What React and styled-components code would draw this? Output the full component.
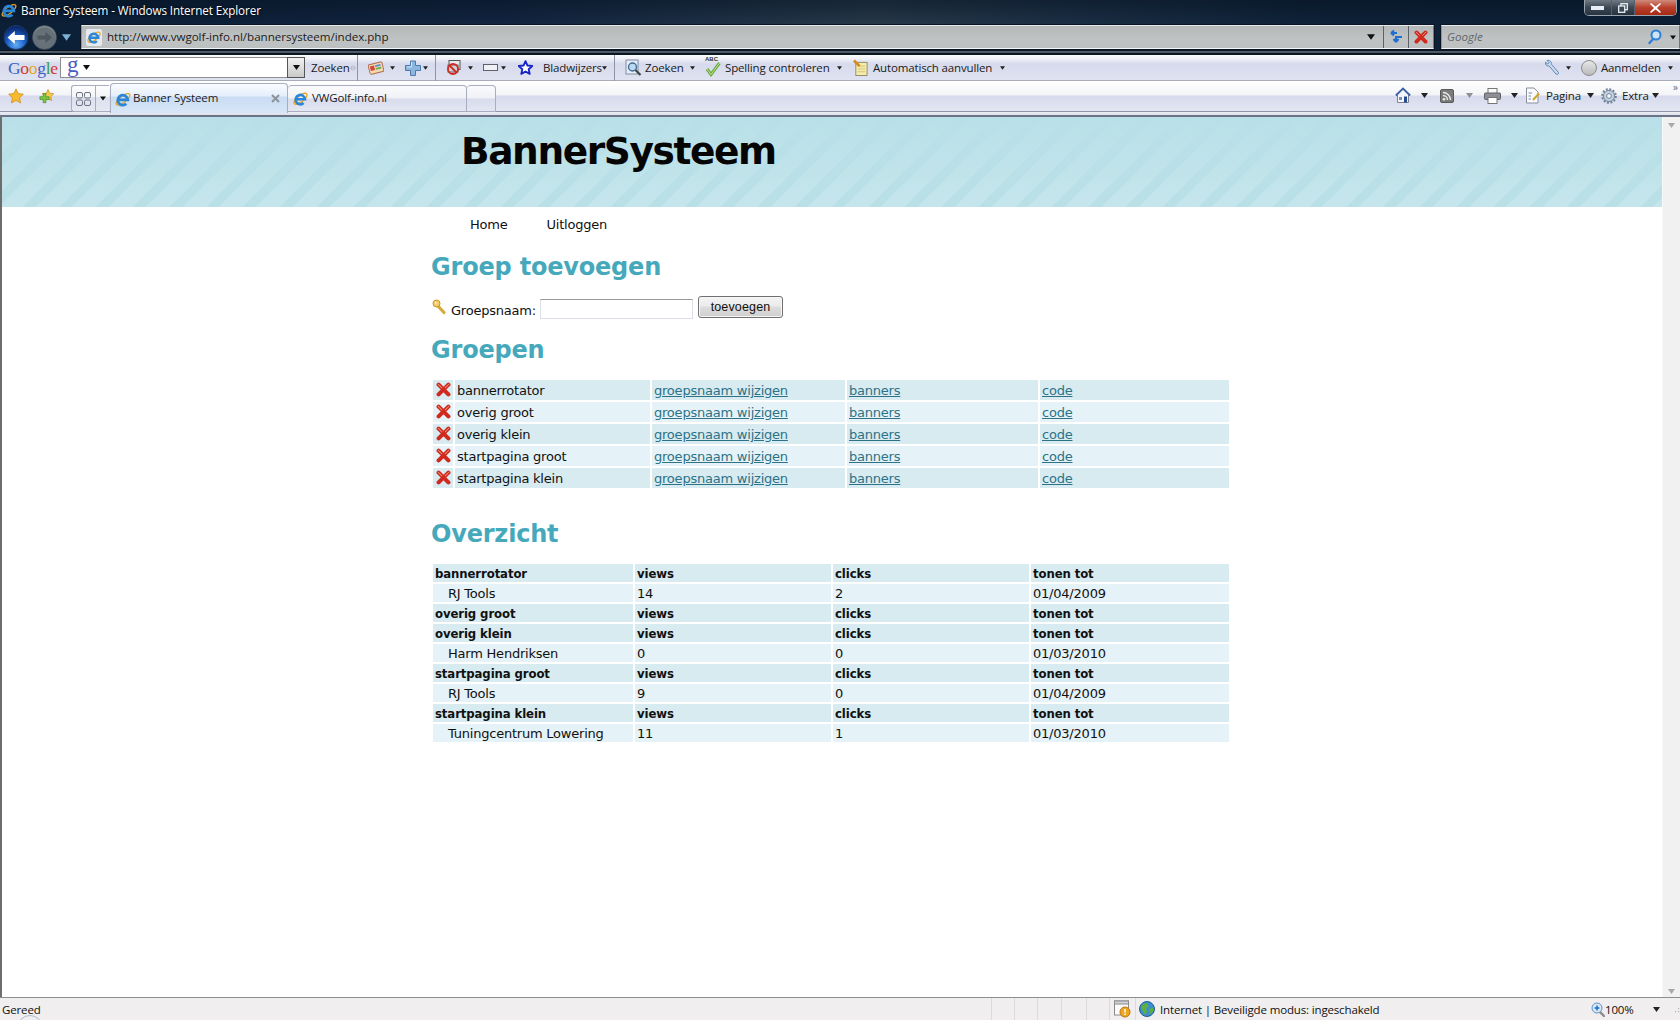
import React from "react";
import styled, { createGlobalStyle } from "styled-components";

const Global = createGlobalStyle`
  html, body { margin: 0; padding: 0; height: 100%; overflow: hidden; background: #fff; }
  #root { height: 100%; }
`;

const Shell = styled.div`
  height: 1020px; width: 1680px; display: flex; flex-direction: column; overflow: hidden;
  font-family: "Open Sans", "Noto Sans", sans-serif; position: relative;
`;

/* ---- dark frame ---- */
const Frame = styled.header`
  height: 55px; flex: none; display: flex; flex-direction: column; color: #fff;
  background:
    linear-gradient(to bottom, rgba(5,14,28,.45) 0, rgba(5,14,28,0) 24px),
    linear-gradient(to right, #0b1f36 0, #112540 30%, #263849 52%, #1c3045 62%, #0e2238 78%, #0d2036 100%);
`;
const TitleRow = styled.div`height: 25px; flex: none; display: flex; align-items: flex-start;`;
const TitleText = styled.div`
  font-size: 11.7px; line-height: 20px; margin-left: 4px; letter-spacing: -0.1px; color: #fff;
  text-shadow: 0 0 3px #000; white-space: nowrap;
`;
const TitleIcon = styled.div`margin: 2px 0 0 1px; width: 16px; height: 16px; display: flex;`;
const WinButtons = styled.div`
  margin-left: auto; margin-right: 3px; width: 93px; height: 16px; display: flex; flex: none;
  border: 1px solid #9aa4ad; border-top: none; border-radius: 0 0 5px 5px; overflow: hidden; box-sizing: border-box;
`;
const WinBtn = styled.div`
  flex: ${p => p.$grow || 1}; display: flex; align-items: center; justify-content: center;
  border-left: ${p => p.$first ? "none" : "1px solid #55616d"};
  background: ${p => p.$close ? "linear-gradient(to bottom,#d08a7a 0,#b8402c 50%,#a62a14 100%)" : "linear-gradient(to bottom,#6f7a84 0,#3c4854 50%,#27333f 100%)"};
`;
const AddressRow = styled.div`
  height: 30px; flex: none; display: flex; align-items: flex-start; position: relative;
`;
const NavPad = styled.div`width: 81px; height: 25px; flex: none; display: flex; align-items: center; padding-left: 2px; box-sizing: border-box; margin-top: 0;`;
const Field = styled.div`
  height: 22px; box-sizing: content-box; background: linear-gradient(to bottom,#b4b8b8,#c0c3c3 60%,#bcc0c0);
  border-top: 1px solid #e7e9ea; border-bottom: 1px solid #f4f6f7; border-left: 1px solid #8d949a; border-right: 1px solid #6f7880;
  display: flex; align-items: center; flex: none; box-shadow: 0 0 0 1px #0a1626;
`;
const AddressField = styled(Field)`width: 1351px;`;
const SearchField = styled(Field)`width: 237px; margin-left: 7px;`;
const PageChip = styled.div`
  margin-left: 4px; width: 16px; height: 17px; background: #e6eaee; border-radius: 2px; display: flex; align-items: center; justify-content: center; flex: none;
`;
const UrlText = styled.span`font-size: 11.6px; color: #1b1b1b; margin: -2px 0 0 5px; white-space: nowrap; letter-spacing: -0.03px;`;
const Divider = styled.div`width: 1px; height: 22px; background: #5a6268; flex: none;`;
const FieldBtn = styled.div`
  width: 24px; height: 22px; display: flex; align-items: center; justify-content: center; flex: none;
`;
const SearchHint = styled.span`font-size: 11.6px; font-style: italic; color: #60666a; margin: -2px 0 0 5px;`;
const EndLines = styled.div`
  position: absolute; left: 0; right: 0; bottom: 0; height: 5px;
  background: linear-gradient(to bottom,#0a1626 0,#0a1626 1px,#58636d 1px,#46525c 3px,#0c1522 3px,#0c1522 5px);
`;

/* ---- toolbars ---- */
const GoogleBar = styled.div`
  height: 26px; flex: none; display: flex; align-items: center; padding-left: 8px; box-sizing: border-box;
  padding-right: 7px; font-size: 11.5px; letter-spacing: -0.15px; color: #1a1a1a;
  background: linear-gradient(to bottom,#fbfcfe 0,#eef0f7 4px,#d6daec 9px,#dfe2f0 24px);
  border-bottom: 1px solid #a9acb8;
`;
const TabBar = styled.div`
  height: 36px; flex: none; display: flex; align-items: flex-start; box-sizing: border-box; padding-left: 8px; padding-right: 21px;
  font-size: 11.5px; letter-spacing: -0.15px; color: #1a1a1a; position: relative;
  background: linear-gradient(to bottom,#ffffff 0,#f3f4f7 14px,#d6daec 15px,#e3e6f2 30px,#8f93a8 30px,#8f93a8 31px,#eceef5 31px,#dde0ea 34px,#6c7288 34px,#6c7288 36px);
`;
const ToolRow = styled.div`display: flex; align-items: center; height: 30px; flex: none;`;
const RightTools = styled(ToolRow)`margin-left: auto; height: 29px;`;
const Slot = styled.div`
  flex: none; display: flex; align-items: center; justify-content: flex-start;
  margin-left: ${p => p.$ml || 0}px; width: ${p => p.$w}px; white-space: nowrap;
  ${p => p.$right ? "margin-left:auto;" : ""}
`;
const Sep = styled.div`flex: none; width: 1px; height: 26px; background: #8f93a3; margin-left: ${p => p.$ml || 0}px;`;
const GoogleLogo = styled.div`
  width: 48px; flex: none; font-family: "Liberation Serif", serif; font-size: 17.5px; letter-spacing: -0.3px; line-height: 20px; font-weight: 400;
`;
const Letter = styled.span`color: ${p => p.$c};`;
const GoogleInput = styled.div`
  margin-left: 4px; width: 245px; height: 21px; box-sizing: border-box; background: #fff; display: flex; align-items: center; flex: none;
  border: 1px solid #8f8f8f; border-right: none; padding-left: 6px; position: relative;
`;
const GLetter = styled.span`
  font-family: "Liberation Serif", serif; font-size: 23px; line-height: 19px; color: #4a5cc0; width: 13px; margin-top: -7px;
`;
const ComboBtn = styled.div`
  margin-left: auto; width: 18px; height: 21px; margin-top: -1px; margin-bottom: -1px; box-sizing: border-box; flex: none; display: flex;
  align-items: center; justify-content: center;
  background: linear-gradient(to bottom,#f2f2f2,#c9c9c9); border: 1px solid #555;
`;
const QuickGroup = styled.div`
  margin-left: 16px; margin-top: 4px; width: 38px; height: 27px; display: flex; box-sizing: border-box; flex: none;
  border: 1px solid #a8adc0; border-right: none; border-radius: 3px 0 0 3px; background: linear-gradient(to bottom,#fdfdfe 0,#f3f4f7 45%,#dde0ee 46%,#e6e8f3 100%);
`;
const QuickCell = styled.div`
  width: ${p => p.$w}px; display: flex; align-items: center; justify-content: center; flex: none;
  border-right: 1px solid #a8adc0;
`;
const Tab = styled.div`
  margin-left: ${p => p.$ml || 0}px; width: ${p => p.$w}px; height: ${p => p.$active ? 30 : 27}px; margin-top: ${p => p.$active ? 2 : 4}px;
  box-sizing: border-box; flex: none; display: flex; align-items: center; padding-left: ${p => p.$active ? 4 : 5}px;
  border: 1px solid #a8adc0; border-left: ${p => p.$noLeft ? "none" : "1px solid #a8adc0"}; border-radius: 4px 4px 0 0;
  background: ${p => p.$active
    ? "linear-gradient(to bottom,#fafcff 0,#e4eefb 12px,#c8dcf4 13px,#d9e6f7 100%)"
    : "linear-gradient(to bottom,#fbfbfd 0,#f0f1f5 12px,#d7dbec 13px,#e4e6f2 100%)"};
  ${p => p.$active ? "border-bottom: none;" : ""}
  position: relative;
`;
const TabTitle = styled.span`margin: -2px 0 0 ${p => p.$ml}px; white-space: nowrap; color: #1a1a1a;`;
const TabClose = styled.div`margin-left: auto; margin-right: 7px; display: flex;`;
const Chevrons = styled.div`position: absolute; right: 3px; top: 1px; font-size: 10px; line-height: 10px; color: #5f6b8a; letter-spacing: -1px;`;

/* ---- main ---- */
const Main = styled.div`flex: 1; display: flex; min-height: 0;`;
const Page = styled.main`
  flex: 1; min-width: 0; background: #fff; border-left: 2px solid #6d6d6d;
  font-family: "DejaVu Sans", Verdana, sans-serif; font-size: 13px; letter-spacing: -0.22px; color: #111;
`;
const Banner = styled.div`
  height: 90px; padding-left: 459px; box-sizing: border-box;
  background:
    linear-gradient(to bottom, #b9e0e8 0, rgba(185,224,232,.55) 50%, rgba(185,224,232,.1) 100%),
    repeating-linear-gradient(135deg, #b9dfe7 0, #b9dfe7 9px, #c6e6ec 9px, #c6e6ec 26px);
`;
const Title = styled.h1`margin: 0; font-size: 37.5px; line-height: 68px; font-weight: 700; color: #050505; letter-spacing: -1.4px;`;
const Content = styled.div`margin-left: 429px; width: 800px;`;
const Nav = styled.nav`height: 34px; display: flex; align-items: center; padding-left: 39px; gap: 39px;`;
const NavLink = styled.span`color: #111;`;
const Heading = styled.h2`
  margin: ${p => p.$mt}px 0 0; font-size: 24px; line-height: 30px; font-weight: 700; color: #46a9bb; letter-spacing: -0.2px;
`;
const FormRow = styled.form`margin: 0; margin-top: 14px; height: 23px; display: flex; align-items: flex-start;`;
const KeyWrap = styled.div`margin: 3px 0 0 1px; width: 15px; height: 16px; display: flex;`;
const FieldLabel = styled.label`margin: 6px 0 0 4px; line-height: 18px; width: 85px; flex: none; white-space: nowrap;`;
const TextInput = styled.input`
  margin: 3px 0 0 4px; width: 153px; height: 20px; box-sizing: border-box; padding: 0 2px; background: #fff;
  border: 1px solid #dcdfe6; border-top: 1px solid #9a9a9a; outline: none; flex: none;
`;
const AddButton = styled.button`
  margin: 0 0 0 5px; width: 85px; height: 22px; box-sizing: border-box; padding: 0 0 1px; flex: none;
  font-family: "Liberation Sans", Arial, sans-serif; font-size: 12.5px; color: #111; letter-spacing: .15px;
  border: 1px solid #707070; border-radius: 3px;
  background: linear-gradient(to bottom,#f4f4f4 0,#ebebeb 45%,#dddddd 50%,#cfcfcf 100%);
  box-shadow: inset 0 0 0 1px #f6f6f6;
`;
const Grid = styled.table`
  margin-top: ${p => p.$mt}px; width: 800px; table-layout: fixed; border-collapse: separate; border-spacing: 2px;
  font-size: 13px; letter-spacing: -0.22px;
`;
const Row = styled.tr`
  & > td { background: ${p => p.$even ? "#e5f2f7" : "#d7ebf1"}; height: ${p => p.$h}px; box-sizing: border-box; }
`;
const Cell = styled.td`
  padding: 2px 0 0 ${p => p.$pad || 2}px; white-space: nowrap; line-height: 16px; overflow: hidden; color: #111;
  ${p => p.$bold ? `font-family: "DejaVu Sans Condensed", "DejaVu Sans", sans-serif; font-weight: 700; letter-spacing: -0.1px;` : "font-weight: 400;"}
`;
const IconCell = styled.td`padding: 0 0 1px 3px; line-height: 0;`;
const LinkText = styled.a`color: #2d7286; text-decoration: underline;`;

const Scrollbar = styled.aside`
  width: 18px; flex: none; background: #f1f1f1; box-sizing: border-box; border-left: 1px solid #f8f8f8; display: flex; flex-direction: column;
  align-items: center; justify-content: space-between; padding: 6px 0 3px;
`;

/* ---- status ---- */
const Status = styled.footer`
  height: 23px; flex: none; box-sizing: border-box; border-top: 1px solid #8e8e8e; background: #f0eeee; display: flex; align-items: center;
  font-size: 11.5px; letter-spacing: -0.15px; color: #111; padding-left: 2px; position: relative; overflow: hidden;
`;
const StatusLabel = styled.span`width: ${p => p.$w}px; margin-left: ${p => p.$ml || 0}px; flex: none; white-space: nowrap; display: flex; align-items: center;`;
const Notch = styled.div`
  flex: none; width: 1px; height: 22px; background: #dcdada; margin-left: ${p => p.$ml}px;
`;
const Orb = styled.div`
  position: absolute; left: 17px; top: 17px; width: 26px; height: 26px; border-radius: 50%; border: 1px solid #a9bdd1; box-sizing: border-box;
`;

/* ---- icons ---- */
const Caret = ({ w = 5, c = "#222" }) => (
  <svg width={w} height={Math.ceil(w * 0.7)} viewBox="0 0 10 7"><path d="M0 0H10L5 7Z" fill={c} /></svg>
);
const IE = ({ s = 16 }) => (
  <svg width={s} height={s} viewBox="0 0 16 16">
    <ellipse cx="8" cy="8.300" rx="8.300" ry="3.200" transform="rotate(-38 8 8.300)" fill="none" stroke="#e6a41c" strokeWidth="1.300" />
    <path d="M3.200 8.800H12.800A5 5 0 1 0 11.300 12.800" fill="none" stroke="#2a86d8" strokeWidth="2.800" />
  </svg>
);
const Back = () => (
  <svg width="26" height="25" viewBox="0 0 26 25">
    <defs>
      <radialGradient id="bk" cx="50%" cy="80%" r="70%"><stop offset="0" stopColor="#62aef6" /><stop offset=".55" stopColor="#1b5fc6" /><stop offset="1" stopColor="#0c2a70" /></radialGradient>
    </defs>
    <circle cx="13" cy="12.500" r="12" fill="url(#bk)" stroke="#1c3a6a" strokeWidth="1" />
    <path d="M4.500 12.500L11.800 6V10H21.500V15H11.800V19Z" fill="#fff" />
  </svg>
);
const Forward = () => (
  <svg width="25" height="25" viewBox="0 0 25 25">
    <defs>
      <radialGradient id="fw" cx="50%" cy="55%" r="62%"><stop offset="0" stopColor="#6a747b" /><stop offset=".7" stopColor="#656f77" /><stop offset="1" stopColor="#aeb6bb" /></radialGradient>
    </defs>
    <circle cx="12.500" cy="12.500" r="12" fill="url(#fw)" stroke="#39434c" strokeWidth=".6" />
    <path d="M20 12.500L13.500 7V10.500H5.500V14.500H13.500V18Z" fill="#4d575e" />
  </svg>
);
const Refresh = () => (
  <svg width="17" height="17" viewBox="0 0 17 17" fill="none" strokeWidth="2">
    <path d="M9 4H3M3 4L6 1.500M3 4L6 6.500" stroke="#1f6fd0" />
    <path d="M8 13V8H14M8 13L5.500 10M8 13L10.500 10" stroke="#1f6fd0" />
  </svg>
);
const RedX = ({ s = 15 }) => (
  <svg width={s} height={s} viewBox="0 0 16 16">
    <path d="M2.800 2.800L13.200 13.200M13.200 2.800L2.800 13.200" stroke="#cf2a1d" strokeWidth="4.400" strokeLinecap="round" />
    <path d="M2.400 2.400L6.200 6.200M13.600 2.400L9.800 6.200" stroke="#f0907f" strokeWidth="1.100" strokeLinecap="round" />
  </svg>
);
const Lens = () => (
  <svg width="14" height="16" viewBox="0 0 14 16" fill="none">
    <circle cx="8" cy="6" r="4.500" stroke="#2f7fd6" strokeWidth="2" fill="#cfe4f7" />
    <path d="M5 10L1.500 14" stroke="#2f7fd6" strokeWidth="2.400" strokeLinecap="round" />
  </svg>
);
const ZoomIcon = () => (
  <svg width="14" height="15" viewBox="0 0 14 15" fill="none">
    <path d="M8 9L13 14" stroke="#8a8a8a" strokeWidth="2.400" strokeLinecap="round" />
    <circle cx="6" cy="6" r="5" fill="#dbe9f7" stroke="#5f8fc4" />
    <path d="M3.500 6H8.500M6 3.500V8.500" stroke="#1f6fd0" strokeWidth="1.600" />
  </svg>
);
const Grid4 = () => (
  <svg width="15" height="14" viewBox="0 0 15 14" fill="none" stroke="#6d7180" strokeWidth="1">
    <rect x=".5" y=".5" width="6" height="5.500" rx="1.500" /><rect x="8.500" y=".5" width="6" height="5.500" rx="1.500" />
    <rect x=".5" y="8" width="6" height="5.500" rx="1.500" /><rect x="8.500" y="8" width="6" height="5.500" rx="1.500" />
  </svg>
);
const StarGold = () => (
  <svg width="16" height="16" viewBox="0 0 16 16"><path d="M8 .8L10.200 5.600 15.400 6.200 11.600 9.800 12.600 15 8 12.400 3.400 15 4.400 9.800.6 6.200 5.800 5.600Z" fill="#f7b92d" stroke="#c98a12" strokeWidth=".7" /></svg>
);
const StarAdd = () => (
  <svg width="16" height="16" viewBox="0 0 16 16">
    <path d="M9 1.500L10.600 5.200 14.800 5.700 11.800 8.500 12.600 12.600 9 10.600 5.400 12.600 6.200 8.500 3.200 5.700 7.400 5.200Z" fill="#f7c94d" stroke="#c98a12" strokeWidth=".7" />
    <path d="M4.500 6V9.500H1V12.500H4.500V16H7.500V12.500H11V9.500H7.500V6Z" transform="scale(.92)" fill="#7dc63f" stroke="#3f8a1e" strokeWidth=".7" />
  </svg>
);
const Cards = () => (
  <svg width="17" height="16" viewBox="0 0 17 16">
    <rect x="1" y="3" width="15" height="10.500" rx="1.500" transform="rotate(-14 8 8)" fill="#f4d9b0" stroke="#b06a50" />
    <rect x="2.500" y="5" width="4.500" height="5" fill="#d8463a" transform="rotate(-14 8 8)" />
    <rect x="8" y="5" width="6" height="2" fill="#5a8fd4" transform="rotate(-14 8 8)" />
    <rect x="8" y="8" width="6" height="2" fill="#6ab04c" transform="rotate(-14 8 8)" />
  </svg>
);
const Plus = () => (
  <svg width="16" height="16" viewBox="0 0 16 16"><path d="M5.500 1H10.500V5.500H15.500V10.500H10.500V15.500H5.500V10.500H.5V5.500H5.500Z" fill="#8db6df" stroke="#4a7bb0" /><path d="M6.500 2V7H2" fill="none" stroke="#d5e6f6" /></svg>
);
const Blocker = () => (
  <svg width="16" height="17" viewBox="0 0 16 17">
    <rect x="3" y="1.500" width="11" height="9" fill="#e9eaf0" stroke="#555" />
    <rect x="2" y="6" width="10" height="7" fill="#cfd2da" stroke="#666" />
    <circle cx="7" cy="10" r="5" fill="none" stroke="#d12a22" strokeWidth="1.800" />
    <path d="M3.500 6.500L10.500 13.500" stroke="#d12a22" strokeWidth="1.800" />
  </svg>
);
const Rect = () => (
  <svg width="15" height="7" viewBox="0 0 15 7"><rect x=".5" y=".5" width="14" height="6" fill="#f0f1f4" stroke="#5e6168" /></svg>
);
const StarBlue = () => (
  <svg width="15" height="15" viewBox="0 0 16 16"><path d="M8 1.200L10.100 5.900 15.200 6.400 11.400 9.800 12.500 14.800 8 12.200 3.500 14.800 4.600 9.800.8 6.400 5.900 5.900Z" fill="#fff" stroke="#1722c8" strokeWidth="2" strokeLinejoin="round" /></svg>
);
const Magnifier = () => (
  <svg width="17" height="18" viewBox="0 0 17 18">
    <rect x="1" y="1" width="12" height="14" fill="#e8eef7" stroke="#7e8ca3" />
    <circle cx="7.500" cy="8" r="4" fill="#bcd9ef" stroke="#3f6d97" strokeWidth="1.400" />
    <path d="M10.500 11L15.500 16" stroke="#444" strokeWidth="2.200" />
  </svg>
);
const SpellCheck = () => (
  <svg width="16" height="18" viewBox="0 0 16 18">
    <path d="M2 10L6 15.500 14.500 4" fill="none" stroke="#69a93a" strokeWidth="3" />
    <path d="M2 10L6 15.500 14.500 4" fill="none" stroke="#c2e29d" strokeWidth="1" />
  </svg>
);
const SmallAbc = styled.span`
  position: absolute; left: 0; top: -3px; font: 700 6px/7px "Liberation Sans", sans-serif; color: #333; letter-spacing: 0;
`;
const IconStack = styled.div`position: relative; display: flex;`;
const Note = () => (
  <svg width="16" height="18" viewBox="0 0 16 18">
    <rect x="3" y="3" width="12" height="14" fill="#f6ecaa" stroke="#8d8a6a" />
    <path d="M5 7H13M5 10H13M5 13H13" stroke="#d0c17a" />
    <path d="M1 1L7 7" stroke="#d68a1e" strokeWidth="3" />
  </svg>
);
const Wrench = () => (
  <svg width="16" height="17" viewBox="0 0 16 17" fill="none">
    <path d="M3 1.500L5 3.500 3.800 5 1.500 3.200C1 5.500 2.800 7.500 5 6.800L12 15C13 16 15 15 14.500 13.500L7.300 5.200C7.800 2.800 5.500.7 3 1.500Z" fill="#cfdcec" stroke="#5b86b5" />
  </svg>
);
const Avatar = () => (
  <svg width="16" height="16" viewBox="0 0 16 16">
    <defs><linearGradient id="av" x1="0" y1="0" x2="0" y2="1"><stop offset="0" stopColor="#e8e8e8" /><stop offset="1" stopColor="#b9b9b9" /></linearGradient></defs>
    <circle cx="8" cy="8" r="7.500" fill="url(#av)" stroke="#8c8c8c" />
  </svg>
);
const Home = () => (
  <svg width="16" height="17" viewBox="0 0 16 17">
    <path d="M2.500 8V15.500H13.500V8" fill="#f5f5f8" stroke="#7c8296" />
    <path d="M.8 8.500L8 1.500 15.200 8.500" fill="none" stroke="#3b5fa5" strokeWidth="1.800" />
    <rect x="4" y="10" width="3" height="3" fill="#6f90c4" /><rect x="9" y="9.500" width="3" height="6" fill="#254a90" />
  </svg>
);
const Rss = () => (
  <svg width="14" height="14" viewBox="0 0 14 14">
    <rect x=".5" y=".5" width="13" height="13" rx="1.500" fill="#7b7b7b" stroke="#5a5a5a" />
    <circle cx="4" cy="10.200" r="1.300" fill="#e8e8e8" />
    <path d="M3 6.500A4.500 4.500 0 0 1 7.500 11M3 3.500A7.500 7.500 0 0 1 10.500 11" fill="none" stroke="#e8e8e8" strokeWidth="1.400" />
  </svg>
);
const Printer = () => (
  <svg width="17" height="16" viewBox="0 0 17 16">
    <rect x="4" y=".5" width="9" height="5" fill="#fafafa" stroke="#777" />
    <rect x=".5" y="5" width="16" height="6.500" rx="1" fill="#8e8f96" stroke="#5e5f66" />
    <rect x="4" y="9.500" width="9" height="6" fill="#fff" stroke="#777" />
  </svg>
);
const PageIcon = () => (
  <svg width="15" height="17" viewBox="0 0 15 17">
    <path d="M1.500 1H9L13 5V16H1.500Z" fill="#fbfbfd" stroke="#8b8f9d" />
    <path d="M3.500 6H7M3.500 9H6M3.500 12H6" stroke="#6f86b8" />
    <path d="M8 13L14 6.500" stroke="#c9a62a" strokeWidth="2" />
  </svg>
);
const Gear = () => (
  <svg width="16" height="16" viewBox="0 0 16 16">
    <circle cx="8" cy="8" r="5.500" fill="#c6d3e2" stroke="#6f8299" strokeWidth="1" />
    <circle cx="8" cy="8" r="6.800" fill="none" stroke="#6f8299" strokeWidth="2" strokeDasharray="2 1.570" />
    <circle cx="8" cy="8" r="2.400" fill="#f3f6fa" stroke="#6f8299" />
  </svg>
);
const TinyArrows = () => (
  <svg width="6" height="6" viewBox="0 0 6 6"><path d="M2.500 0V6L0 3ZM3.500 0V6L6 3Z" fill="#b9bcc7" /></svg>
);
const Key = () => (
  <svg width="15" height="16" viewBox="0 0 15 16">
    <path d="M5 6L12 13.500" stroke="#d6a93a" strokeWidth="3.200" strokeLinecap="round" />
    <circle cx="4.500" cy="4.500" r="3.500" fill="#f3cd6a" stroke="#c79524" />
    <circle cx="3.800" cy="3.800" r=".9" fill="#fff8dc" />
  </svg>
);
const InfoBar = () => (
  <svg width="17" height="18" viewBox="0 0 17 18">
    <rect x=".5" y="1" width="14" height="14" fill="#fbfbfb" stroke="#8a8a8a" />
    <rect x=".5" y="1" width="14" height="3" fill="#cfd3da" stroke="#8a8a8a" />
    <circle cx="11" cy="12" r="5" fill="#f0a51e" stroke="#b97710" />
    <path d="M11 9V12.500M11 13.600V15" stroke="#fff" strokeWidth="1.500" />
  </svg>
);
const Globe = () => (
  <svg width="16" height="16" viewBox="0 0 16 16">
    <circle cx="8" cy="8" r="7.500" fill="#3b8fd0" stroke="#1f5e94" />
    <path d="M4 3L8 2 9.500 5 7 8 8 11 6 14 3.500 10 2 6.500ZM10 8L14 6.500 14.500 10 11.500 13.500Z" fill="#5fae3e" />
  </svg>
);
const Grip = () => (
  <svg width="8" height="8" viewBox="0 0 8 8" fill="#b5b3b3"><rect x="6" y="0" width="1.200" height="1.200" /><rect x="3" y="3" width="1.200" height="1.200" /><rect x="6" y="3" width="1.200" height="1.200" /><rect x="0" y="6" width="1.200" height="1.200" /><rect x="3" y="6" width="1.200" height="1.200" /><rect x="6" y="6" width="1.200" height="1.200" /></svg>
);

const groups = ["bannerrotator", "overig groot", "overig klein", "startpagina groot", "startpagina klein"];
const overview = [
  { head: "bannerrotator" },
  { name: "RJ Tools", views: "14", clicks: "2", until: "01/04/2009" },
  { head: "overig groot" },
  { head: "overig klein" },
  { name: "Harm Hendriksen", views: "0", clicks: "0", until: "01/03/2010" },
  { head: "startpagina groot" },
  { name: "RJ Tools", views: "9", clicks: "0", until: "01/04/2009" },
  { head: "startpagina klein" },
  { name: "Tuningcentrum Lowering", views: "11", clicks: "1", until: "01/03/2010" },
];

export default function App() {
  return (
    <Shell>
      <Global />
      <Frame>
        <TitleRow>
          <TitleIcon><IE /></TitleIcon>
          <TitleText>Banner Systeem - Windows Internet Explorer</TitleText>
          <WinButtons>
            <WinBtn $first $grow={27}><svg width="13" height="4"><rect width="13" height="4" fill="#e8eef3" /></svg></WinBtn>
            <WinBtn $grow={23}><svg width="10" height="10" viewBox="0 0 10 10" fill="none" stroke="#e8eef3" strokeWidth="1.300"><rect x="3" y=".7" width="6.300" height="6" /><rect x=".7" y="3" width="6" height="6.300" fill="#3c4854" /></svg></WinBtn>
            <WinBtn $close $grow={43}><svg width="11" height="10" viewBox="0 0 11 10"><path d="M1 0L5.500 3.500 10 0 11 1 7 5 11 9 10 10 5.500 6.500 1 10 0 9 4 5 0 1Z" fill="#fff" /></svg></WinBtn>
          </WinButtons>
        </TitleRow>
        <AddressRow>
          <NavPad>
            <Slot $ml={1} $w={26}><Back /></Slot>
            <Slot $ml={3} $w={25}><Forward /></Slot>
            <Slot $ml={5} $w={9}><Caret w={9} c="#7fb0d5" /></Slot>
          </NavPad>
          <AddressField>
            <PageChip><IE s={14} /></PageChip>
            <UrlText>http://www.vwgolf-info.nl/bannersysteem/index.php</UrlText>
            <Slot $right $w={8}><Caret w={8} c="#111" /></Slot>
            <Slot $ml={8} $w={0} />
            <Divider />
            <FieldBtn><Refresh /></FieldBtn>
            <Divider />
            <FieldBtn><RedX s={14} /></FieldBtn>
          </AddressField>
          <SearchField>
            <SearchHint>Google</SearchHint>
            <Slot $right $w={14}><Lens /></Slot>
            <Slot $ml={8} $w={6}><Caret w={6} c="#111" /></Slot>
            <Slot $ml={3} $w={0} />
          </SearchField>
          <EndLines />
        </AddressRow>
      </Frame>

      <GoogleBar>
        <GoogleLogo>
          <Letter $c="#3a62c9">G</Letter><Letter $c="#d33a2c">o</Letter><Letter $c="#e3a81e">o</Letter><Letter $c="#3a62c9">g</Letter><Letter $c="#3f9b3f">l</Letter><Letter $c="#d33a2c">e</Letter>
        </GoogleLogo>
        <GoogleInput>
          <GLetter>g</GLetter>
          <Slot $ml={3} $w={7}><Caret w={7} c="#111" /></Slot>
          <ComboBtn><Caret w={7} c="#111" /></ComboBtn>
        </GoogleInput>
        <Slot $ml={6} $w={38}>Zoeken</Slot>
        <Slot $ml={1} $w={6}><TinyArrows /></Slot>
        <Sep $ml={1} />
        <Slot $ml={10} $w={16}><Cards /></Slot>
        <Slot $ml={6} $w={5}><Caret /></Slot>
        <Slot $ml={10} $w={16}><Plus /></Slot>
        <Slot $ml={2} $w={5}><Caret /></Slot>
        <Sep $ml={7} />
        <Slot $ml={10} $w={16}><Blocker /></Slot>
        <Slot $ml={6} $w={5}><Caret /></Slot>
        <Slot $ml={10} $w={15}><Rect /></Slot>
        <Slot $ml={3} $w={5}><Caret /></Slot>
        <Slot $ml={12} $w={15}><StarBlue /></Slot>
        <Slot $ml={10} $w={57}>Bladwijzers</Slot>
        <Slot $ml={2} $w={5}><Caret /></Slot>
        <Sep $ml={7} />
        <Slot $ml={10} $w={17}><Magnifier /></Slot>
        <Slot $ml={3} $w={38}>Zoeken</Slot>
        <Slot $ml={7} $w={5}><Caret /></Slot>
        <Slot $ml={10} $w={16}><IconStack><SmallAbc>ABC</SmallAbc><SpellCheck /></IconStack></Slot>
        <Slot $ml={4} $w={106}>Spelling controleren</Slot>
        <Slot $ml={6} $w={5}><Caret /></Slot>
        <Slot $ml={11} $w={15}><Note /></Slot>
        <Slot $ml={5} $w={120}>Automatisch aanvullen</Slot>
        <Slot $ml={7} $w={5}><Caret /></Slot>
        <Slot $right $w={16}><Wrench /></Slot>
        <Slot $ml={6} $w={5}><Caret /></Slot>
        <Slot $ml={10} $w={16}><Avatar /></Slot>
        <Slot $ml={4} $w={61}>Aanmelden</Slot>
        <Slot $ml={6} $w={5}><Caret /></Slot>
      </GoogleBar>

      <TabBar>
        <ToolRow>
          <Slot $w={16}><StarGold /></Slot>
          <Slot $ml={15} $w={16}><StarAdd /></Slot>
        </ToolRow>
        <QuickGroup>
          <QuickCell $w={23}><Grid4 /></QuickCell>
          <QuickCell $w={14}><Caret w={6} c="#111" /></QuickCell>
        </QuickGroup>
        <Tab $active $ml={1} $w={178}>
          <IE />
          <TabTitle $ml={2}>Banner Systeem</TabTitle>
          <TabClose><svg width="9" height="9" viewBox="0 0 9 9"><path d="M1 1L8 8M8 1L1 8" stroke="#8f9399" strokeWidth="2" /></svg></TabClose>
        </Tab>
        <Tab $noLeft $w={179}>
          <IE s={15} />
          <TabTitle $ml={4}>VWGolf-info.nl</TabTitle>
        </Tab>
        <Tab $noLeft $w={29} />
        <RightTools>
          <Slot $w={16}><Home /></Slot>
          <Slot $ml={10} $w={7}><Caret w={7} c="#222" /></Slot>
          <Slot $ml={12} $w={14}><Rss /></Slot>
          <Slot $ml={12} $w={7}><Caret w={7} c="#8f8f8f" /></Slot>
          <Slot $ml={11} $w={17}><Printer /></Slot>
          <Slot $ml={10} $w={7}><Caret w={7} c="#222" /></Slot>
          <Slot $ml={7} $w={15}><PageIcon /></Slot>
          <Slot $ml={6} $w={35}>Pagina</Slot>
          <Slot $ml={6} $w={7}><Caret w={7} c="#222" /></Slot>
          <Slot $ml={7} $w={16}><Gear /></Slot>
          <Slot $ml={5} $w={24}>Extra</Slot>
          <Slot $ml={6} $w={7}><Caret w={7} c="#222" /></Slot>
        </RightTools>
        <Chevrons>»</Chevrons>
      </TabBar>

      <Main>
        <Page>
          <Banner><Title>BannerSysteem</Title></Banner>
          <Content>
            <Nav><NavLink>Home</NavLink><NavLink>Uitloggen</NavLink></Nav>
            <Heading $mt={11}>Groep toevoegen</Heading>
            <FormRow>
              <KeyWrap><Key /></KeyWrap>
              <FieldLabel>Groepsnaam:</FieldLabel>
              <TextInput type="text" />
              <AddButton type="button">toevoegen</AddButton>
            </FormRow>
            <Heading $mt={16}>Groepen</Heading>
            <Grid $mt={13}>
              <colgroup><col width="20" /><col width="195" /><col width="193" /><col width="191" /><col width="189" /></colgroup>
              <tbody>
                {groups.map((g, i) => (
                  <Row key={g} $even={i % 2 === 1} $h={20}>
                    <IconCell><RedX /></IconCell>
                    <Cell>{g}</Cell>
                    <Cell><LinkText href="#">groepsnaam wijzigen</LinkText></Cell>
                    <Cell><LinkText href="#">banners</LinkText></Cell>
                    <Cell><LinkText href="#">code</LinkText></Cell>
                  </Row>
                ))}
              </tbody>
            </Grid>
            <Heading $mt={29}>Overzicht</Heading>
            <Grid $mt={13}>
              <colgroup><col width="200" /><col width="196" /><col width="196" /><col width="198" /></colgroup>
              <tbody>
                {overview.map((r, i) => r.head ? (
                  <Row key={i} $h={18}>
                    <Cell $bold>{r.head}</Cell><Cell $bold>views</Cell><Cell $bold>clicks</Cell><Cell $bold>tonen tot</Cell>
                  </Row>
                ) : (
                  <Row key={i} $even $h={18}>
                    <Cell $pad={15}>{r.name}</Cell><Cell>{r.views}</Cell><Cell>{r.clicks}</Cell><Cell>{r.until}</Cell>
                  </Row>
                ))}
              </tbody>
            </Grid>
          </Content>
        </Page>
        <Scrollbar>
          <Caret w={7} c="#a9a9a9" />
          <Caret w={7} c="#a9a9a9" />
        </Scrollbar>
      </Main>

      <Status>
        <Orb />
        <StatusLabel $w={60}>Gereed</StatusLabel>
        <Notch $ml={929} /><Notch $ml={22} /><Notch $ml={22} /><Notch $ml={23} /><Notch $ml={24} /><Notch $ml={22} />
        <StatusLabel $ml={4} $w={17}><InfoBar /></StatusLabel>
        <Notch $ml={4} />
        <StatusLabel $ml={3} $w={16}><Globe /></StatusLabel>
        <StatusLabel $ml={5} $w={222}>Internet | Beveiligde modus: ingeschakeld</StatusLabel>
        <StatusLabel $ml={209} $w={14}><ZoomIcon /></StatusLabel>
        <StatusLabel $ml={0} $w={30}>100%</StatusLabel>
        <StatusLabel $ml={18} $w={8}><Caret w={7} c="#222" /></StatusLabel>
        <StatusLabel $ml={14} $w={8}><Grip /></StatusLabel>
      </Status>
    </Shell>
  );
}
